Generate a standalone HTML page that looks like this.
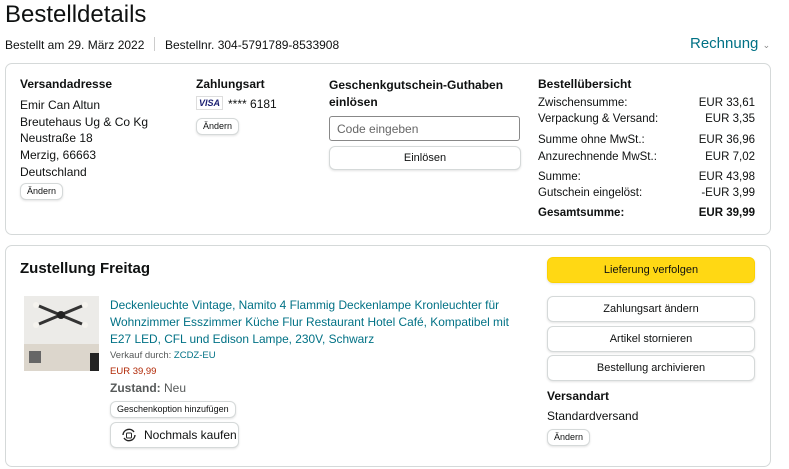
<!DOCTYPE html>
<html><head><meta charset="utf-8"><style>
*{box-sizing:border-box;margin:0;padding:0}
body{width:789px;height:469px;background:#fff;font-family:"Liberation Sans",Arial,sans-serif;color:#0f1111;position:relative;overflow:hidden;font-size:12px}
.a{position:absolute;white-space:nowrap}
.box{position:absolute;border:1px solid #d5d9d9;border-radius:7px}
.b{font-weight:bold}
.btn{position:absolute;border:1px solid #d5d9d9;border-radius:6px;background:#fff;box-shadow:0 1px 2px rgba(15,17,17,.12);text-align:center;font-size:11px}
.sm{font-size:9px;padding:0 6px;height:17px;line-height:15px}
.lk{color:#007185}
.row{position:absolute;left:538px;width:217px;font-size:11.5px}
.row span:last-child{float:right}
</style></head><body>
<div class="a" style="left:5px;top:1px;font-size:24px">Bestelldetails</div>
<div class="a" style="left:5px;top:38px;font-size:12px">Bestellt am 29. März 2022</div>
<div class="a" style="left:154px;top:37px;height:14px;border-left:1px solid #ccc"></div>
<div class="a" style="left:165px;top:38px;font-size:12px">Bestellnr. 304-5791789-8533908</div>
<div class="a lk" style="left:690px;top:35px;font-size:15px">Rechnung <span style="font-size:9px;color:#888">⌄</span></div>

<div class="box" style="left:5px;top:63px;width:766px;height:172px"></div>
<div class="a b" style="left:20px;top:77px">Versandadresse</div>
<div class="a" style="left:20px;top:97px;line-height:16.7px">Emir Can Altun<br>Breutehaus Ug &amp; Co Kg<br>Neustraße 18<br>Merzig, 66663<br>Deutschland</div>
<div class="btn sm" style="left:20px;top:183px">Ändern</div>
<div class="a b" style="left:196px;top:77px">Zahlungsart</div>
<div class="a" style="left:196px;top:96px;border:1px solid #ddd;font-size:9px;font-weight:bold;font-style:italic;color:#1a1f71;padding:1px 2px">VISA</div>
<div class="a" style="left:228px;top:97px">**** 6181</div>
<div class="btn sm" style="left:196px;top:118px">Ändern</div>
<div class="a b" style="left:329px;top:77px;line-height:17px">Geschenkgutschein-Guthaben<br>einlösen</div>
<div class="a" style="left:329px;top:116px;width:191px;height:25px;border:1px solid #888;border-radius:3px;padding:5px 7px;color:#666">Code eingeben</div>
<div class="btn" style="left:329px;top:146px;width:192px;height:24px;line-height:22px">Einlösen</div>
<div class="a b" style="left:538px;top:77px">Bestellübersicht</div>
<div class="row" style="top:97px"><span>Zwischensumme:</span><span>EUR 33,61</span></div>
<div class="row" style="top:113px"><span>Verpackung &amp; Versand:</span><span>EUR 3,35</span></div>
<div class="row" style="top:134px"><span>Summe ohne MwSt.:</span><span>EUR 36,96</span></div>
<div class="row" style="top:151px"><span>Anzurechnende MwSt.:</span><span>EUR 7,02</span></div>
<div class="row" style="top:171px"><span>Summe:</span><span>EUR 43,98</span></div>
<div class="row" style="top:187px"><span>Gutschein eingelöst:</span><span>-EUR 3,99</span></div>
<div class="row b" style="top:207px"><span>Gesamtsumme:</span><span>EUR 39,99</span></div>

<div class="box" style="left:5px;top:245px;width:766px;height:222px"></div>
<div class="a b" style="left:20px;top:260px;font-size:15px">Zustellung Freitag</div>
<svg class="a" style="left:24px;top:296px" width="75" height="75"><rect width="75" height="75" fill="#ecebe8"/><rect y="48" width="75" height="27" fill="#dcd6cc"/><rect x="5" y="55" width="12" height="12" fill="#666"/><rect x="66" y="57" width="9" height="18" fill="#222"/><g stroke="#333" stroke-width="3"><line x1="15" y1="10" x2="58" y2="28"/><line x1="15" y1="28" x2="58" y2="10"/></g><circle cx="37" cy="19" r="4" fill="#222"/><g fill="#f5f3ee"><circle cx="12" cy="9" r="3"/><circle cx="12" cy="29" r="3"/><circle cx="61" cy="9" r="3"/><circle cx="61" cy="29" r="3"/></g></svg>
<div class="a lk" style="left:110px;top:297px;line-height:17px;font-size:11.9px">Deckenleuchte Vintage, Namito 4 Flammig Deckenlampe Kronleuchter für<br>Wohnzimmer Esszimmer Küche Flur Restaurant Hotel Café, Kompatibel mit<br>E27 LED, CFL und Edison Lampe, 230V, Schwarz</div>
<div class="a" style="left:110px;top:350px;font-size:9.5px;color:#565959">Verkauf durch: <span class="lk">ZCDZ-EU</span></div>
<div class="a" style="left:110px;top:366px;font-size:9.5px;color:#b12704">EUR 39,99</div>
<div class="a" style="left:110px;top:381px;font-size:12px;color:#565959"><b>Zustand:</b> Neu</div>
<div class="btn sm" style="left:110px;top:401px">Geschenkoption hinzufügen</div>
<div class="btn" style="left:110px;top:422px;width:129px;height:26px;line-height:24px;font-size:12px;text-align:left;padding-left:8px"><svg width="20" height="16" style="vertical-align:-4px;margin-right:5px"><path d="M4 8a6 6 0 0 1 11-3M16 8a6 6 0 0 1-11 3" fill="none" stroke="#222" stroke-width="1.4"/><rect x="7.5" y="6" width="5" height="5" rx="1" fill="none" stroke="#222"/></svg>Nochmals kaufen</div>

<div class="btn" style="left:547px;top:257px;width:208px;height:26px;line-height:24px;background:#ffd814;border-color:#fcd200">Lieferung verfolgen</div>
<div class="btn" style="left:547px;top:296px;width:208px;height:26px;line-height:24px">Zahlungsart ändern</div>
<div class="btn" style="left:547px;top:326px;width:208px;height:26px;line-height:24px">Artikel stornieren</div>
<div class="btn" style="left:547px;top:355px;width:208px;height:26px;line-height:24px">Bestellung archivieren</div>
<div class="a b" style="left:547px;top:389px">Versandart</div>
<div class="a" style="left:547px;top:409px">Standardversand</div>
<div class="btn sm" style="left:547px;top:429px">Ändern</div>
</body></html>
